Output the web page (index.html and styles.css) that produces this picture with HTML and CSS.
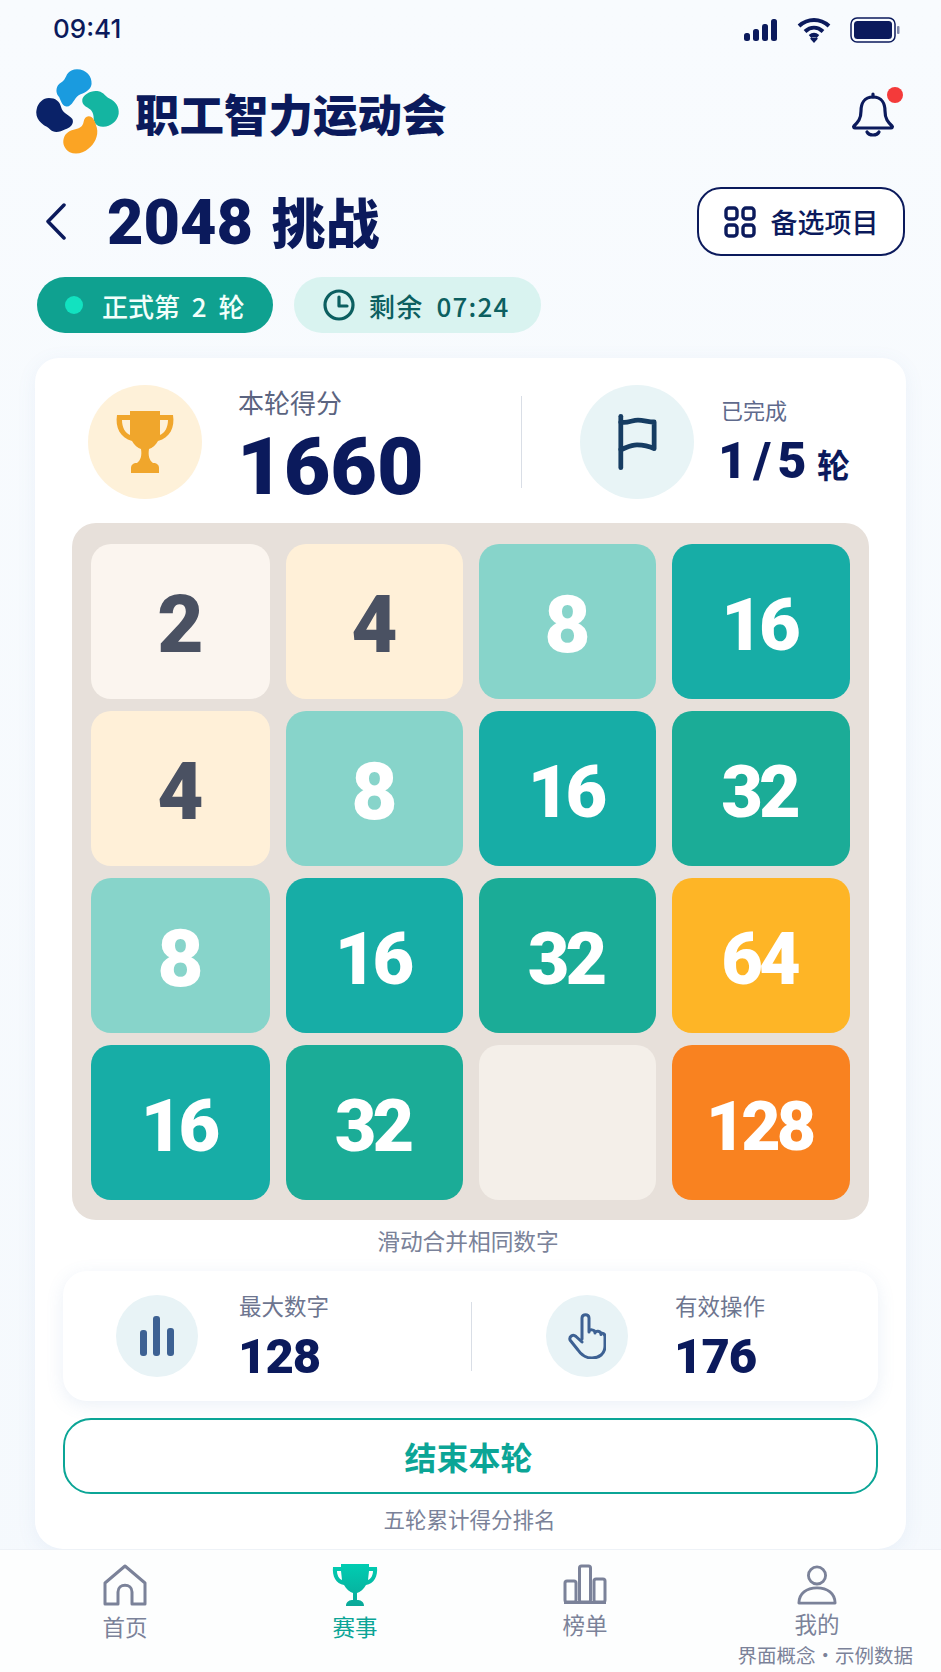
FILE: index.html
```html
<!DOCTYPE html>
<html lang="zh-CN">
<head>
  <meta charset="UTF-8">
  <title>2048 挑战</title>
  <meta name="viewport" content="width=device-width, initial-scale=1.0">
  <link rel="stylesheet" href="styles.css">
</head>
<body>
<div class="page">
  <div class="status">
    <span class="time">09:41</span>
    <div class="status-icons">
      <svg width="36" height="24" viewBox="0 0 36 24"><rect x="0" y="15" width="6" height="8" rx="2.5"/><rect x="9" y="11" width="6" height="12" rx="2.5"/><rect x="18" y="6" width="6" height="17" rx="2.5"/><rect x="27" y="1" width="6" height="22" rx="2.5"/></svg>
      <svg width="34" height="26" viewBox="0 0 34 26" class="wifi"><path d="M2 9C11 1 23 1 32 9"/><path d="M8 14.500C13.500 9.500 20.500 9.500 26 14.500"/><path d="M13 19.500C15.500 17.500 18.500 17.500 21 19.500"/><path class="wifi-dot" d="M17 26l-4-4.500c2.500-1.500 5.500-1.500 8 0z"/></svg>
      <svg class="battery" width="50" height="26" viewBox="0 0 50 26"><rect x="1" y="1" width="44" height="24" rx="6" fill="none" stroke="#0b1a5c" stroke-width="1.500"/><rect x="4" y="4" width="38" height="18" rx="3.500"/><rect x="47" y="9" width="2.500" height="8" rx="1" fill="#7d86a8"/></svg>
    </div>
  </div>

  <div class="brand">
    <div class="brand-left">
      <svg class="logo" width="84" height="87" viewBox="46 61 254 260">
        <path fill="#1a9bdf" d="M170 63C198 63 216 85 214 108C212 128 190 135 175 142C162 150 155 178 138 176C122 174 122 155 114 145C104 132 106 112 122 103C132 97 134 90 140 78C147 68 158 63 170 63Z"/>
        <path fill="#14b5a1" d="M186 155C188 140 215 125 235 130C252 134 256 146 268 152C288 162 298 178 296 198C292 222 270 238 248 237C228 236 220 225 220 205C218 185 205 182 195 175C188 170 185 163 186 155Z"/>
        <path fill="#0a2268" d="M85 150C105 150 118 160 122 178C126 196 146 200 156 214C162 228 150 240 135 245C118 254 100 258 88 245C80 236 72 236 62 226C50 215 44 200 48 184C52 164 68 150 85 150Z"/>
        <path fill="#fba424" d="M205 205C220 205 226 225 230 240C236 265 222 290 205 303C188 318 165 322 148 314C132 305 125 288 130 272C135 255 150 248 165 245C180 241 188 235 190 222C192 212 197 205 205 205Z"/>
      </svg>
      <h1 class="brand-name">职工智力运动会</h1>
    </div>
    <div class="bell">
      <svg width="44" height="46" viewBox="0 0 44 46" fill="none" stroke="#0b1a5c" stroke-width="3.200" stroke-linecap="round" stroke-linejoin="round"><path d="M22 3v3"/><path d="M22 6C13 6 10 13 10 20C10 28 7 31 3 35C2 36 3 37 4 37H40C41 37 42 36 41 35C37 31 34 28 34 20C34 13 31 6 22 6Z"/><path d="M16 41C18 45 26 45 28 41"/></svg>
      <span class="bell-dot"></span>
    </div>
  </div>

  <div class="titlebar">
    <div class="title-left">
      <svg class="back" width="22" height="37" viewBox="0 0 22 37" fill="none" stroke="#0b1a5c" stroke-width="3.500" stroke-linecap="round" stroke-linejoin="round"><path d="M19 2L3 18.500L19 35"/></svg>
      <h2 class="title"><span class="title-num">2048</span> 挑战</h2>
    </div>
    <div class="alt-btn">
      <svg width="32" height="32" viewBox="0 0 32 32" fill="none" stroke="#0b1a5c" stroke-width="3.400"><rect x="2" y="2" width="11" height="11" rx="3"/><rect x="19" y="2" width="11" height="11" rx="3"/><rect x="2" y="19" width="11" height="11" rx="3"/><rect x="19" y="19" width="11" height="11" rx="3"/></svg>
      <span>备选项目</span>
    </div>
  </div>

  <div class="pills">
    <div class="pill pill-round"><span class="pill-dot"></span><span>正式第 2 轮</span></div>
    <div class="pill pill-time">
      <svg width="32" height="32" viewBox="0 0 32 32" fill="none" stroke="#0c5f60" stroke-width="3.200" stroke-linecap="round" stroke-linejoin="round"><circle cx="16" cy="16" r="14"/><path d="M16 8v9h8"/></svg>
      <span>剩余 07:24</span>
    </div>
  </div>

  <div class="card">
    <div class="score-row">
      <div class="score-main">
        <div class="circle circle-gold">
          <svg width="60" height="62" viewBox="0 0 60 62"><path fill="#f0a62c" d="M15 0H45V4H58C60 16 55 27 43 30C41 34 37 37 34 38C33 44 34 49 38 52C42 52 44 54 44 57V62H16V57C16 54 18 52 22 52C26 49 27 44 26 38C23 37 19 34 17 30C5 27 0 16 2 4H15ZM7 9C7 16 10 22 15 24V9ZM53 9H45V24C50 22 53 16 53 9Z"/></svg>
        </div>
        <div class="score-text">
          <div class="score-label">本轮得分</div>
          <div class="score-value">1660</div>
        </div>
      </div>
      <div class="vline vline-tall"></div>
      <div class="score-side">
        <div class="circle circle-pale">
          <svg width="40" height="58" viewBox="0 0 42 58" fill="none" stroke="#163c62" stroke-width="5" stroke-linecap="round" stroke-linejoin="round"><path d="M4 2V56"/><path d="M4 8C10 10 16 6 22 6C28 6 33 8 39 8V36C33 33 27 32 21 32C14 32 10 35 4 37"/></svg>
        </div>
        <div class="side-text">
          <div class="side-label">已完成</div>
          <div class="side-value">1 / 5 <span class="side-unit">轮</span></div>
        </div>
      </div>
    </div>

    <div class="board">
      <div class="tile t2">2</div>
      <div class="tile t4">4</div>
      <div class="tile t8">8</div>
      <div class="tile t16">16</div>
      <div class="tile t4">4</div>
      <div class="tile t8">8</div>
      <div class="tile t16">16</div>
      <div class="tile t32">32</div>
      <div class="tile t8">8</div>
      <div class="tile t16">16</div>
      <div class="tile t32">32</div>
      <div class="tile t64">64</div>
      <div class="tile t16">16</div>
      <div class="tile t32">32</div>
      <div class="tile empty"></div>
      <div class="tile t128">128</div>
    </div>
    <p class="hint">滑动合并相同数字</p>

    <div class="stats">
      <div class="stat stat-max">
        <div class="circle-sm">
          <svg width="34" height="40" viewBox="0 0 34 40" fill="#3d6193"><rect x="0" y="14" width="7" height="26" rx="3"/><rect x="13" y="0" width="7" height="40" rx="3"/><rect x="27" y="12" width="7" height="28" rx="3"/></svg>
        </div>
        <div>
          <div class="stat-label">最大数字</div>
          <div class="stat-value">128</div>
        </div>
      </div>
      <div class="vline vline-short"></div>
      <div class="stat stat-ops">
        <div class="circle-sm">
          <svg width="38" height="46" viewBox="0 0 38 46" fill="none" stroke="#3d6193" stroke-width="3" stroke-linecap="round" stroke-linejoin="round"><path d="M14 26V5C14 0.500 21 0.500 21 5V19C21 16 27 16 27 20C27 17.500 33 17.500 33 21.500C33 19.500 37 20 37 23.500V33C37 41 31 45 24 45C18 45 14 43 10 37L2 27C1 23 5 21 8 23.500L14 29"/></svg>
        </div>
        <div>
          <div class="stat-label">有效操作</div>
          <div class="stat-value">176</div>
        </div>
      </div>
    </div>

    <div class="end-btn">结束本轮</div>
    <p class="foot">五轮累计得分排名</p>
  </div>

  <div class="nav">
    <div class="nav-item">
      <svg width="44" height="42" viewBox="0 0 44 42" fill="none" stroke="#7b8299" stroke-width="3" stroke-linejoin="round"><path d="M22 2L42 19V40H29V28C29 19 15 19 15 28V40H2V19Z"/></svg>
      <span>首页</span>
    </div>
    <div class="nav-item active">
      <svg width="46" height="42" viewBox="0 0 46 42"><defs><linearGradient id="cup" x1="0" y1="0" x2="0" y2="1"><stop offset="0" stop-color="#00cdb2"/><stop offset="1" stop-color="#0aa898"/></linearGradient></defs><path fill="url(#cup)" d="M9 0H37V3H45C46 12 42 20 34 21C32 25 28 28 25 29V36C28 36 32 37 32 42H14C14 37 18 36 21 36V29C18 28 14 25 12 21C4 20 0 12 1 3H9ZM5 7C5 11 7 15 10 16L9 7ZM41 7H37L36 16C39 15 41 11 41 7Z"/></svg>
      <span>赛事</span>
    </div>
    <div class="nav-item">
      <svg width="44" height="40" viewBox="0 0 44 40" fill="none" stroke="#7b8299" stroke-width="3" stroke-linejoin="round"><rect x="2" y="17" width="11" height="21" rx="2"/><rect x="16.500" y="2" width="11" height="36" rx="2"/><rect x="31" y="15" width="11" height="23" rx="2"/><path d="M1 38.500H43"/></svg>
      <span>榜单</span>
    </div>
    <div class="nav-item nav-me">
      <svg width="40" height="42" viewBox="0 0 42 42" fill="none" stroke="#7b8299" stroke-width="3" stroke-linejoin="round"><circle cx="21" cy="11" r="9"/><path d="M2 40C2 30 10 24 21 24C32 24 40 30 40 40Z"/></svg>
      <span>我的</span>
    </div>
    <div class="note">界面概念・示例数据</div>
  </div>
</div>
</body>
</html>
```

FILE: styles.css
```css
* {
  box-sizing: border-box;
}
body {
  margin: 0;
  font-family: "Noto Sans CJK SC", "Noto Sans", sans-serif;
  color: #0b1a5c;
}
h1, h2, p {
  margin: 0;
}
.page {
  width: 941px;
  height: 1672px;
  display: flex;
  flex-direction: column;
  overflow: hidden;
  background: linear-gradient(#f8fbfe, #f5f9fd);
}

.status {
  height: 56px;
  padding: 0 41px 0 53px;
  display: flex;
  justify-content: space-between;
  align-items: center;
}
.time {
  font-family: Inter, sans-serif;
  font-size: 26px;
  font-weight: 500;
}
.status-icons {
  margin-top: 4px;
  display: flex;
  align-items: center;
}
.status-icons svg {
  fill: #0b1a5c;
}
.status-icons .wifi {
  margin-left: 17px;
}
.status-icons .battery {
  margin-left: 19px;
}
.wifi path {
  fill: none;
  stroke: #0b1a5c;
  stroke-width: 4px;
}
.wifi .wifi-dot {
  fill: #0b1a5c;
  stroke: none;
}

.brand {
  height: 110px;
  padding: 0 46px 0 36px;
  display: flex;
  justify-content: space-between;
  align-items: center;
}
.brand-left {
  display: flex;
  align-items: center;
  gap: 15px;
}
.brand-name {
  font-size: 44.500px;
  font-weight: 900;
  line-height: 1.2;
  margin-top: 4px;
}
.bell {
  position: relative;
  display: flex;
  margin-top: 6px;
}
.bell-dot {
  position: absolute;
  top: -4px;
  right: -8px;
  width: 16px;
  height: 16px;
  border-radius: 50%;
  background: #f43a3a;
}

.titlebar {
  margin-top: 21px;
  height: 69px;
  padding: 0 36px 0 45px;
  display: flex;
  justify-content: space-between;
  align-items: center;
}
.title-left {
  display: flex;
  align-items: center;
  gap: 40px;
}
.title {
  font-size: 54px;
  font-weight: 900;
  line-height: 69px;
  word-spacing: 6px;
}
.title-num {
  font-family: Roboto, sans-serif;
  font-size: 63px;
  font-weight: 900;
}
.alt-btn {
  width: 208px;
  height: 69px;
  border: 2px solid #0b1a5c;
  border-radius: 24px;
  background: #fff;
  display: flex;
  align-items: center;
  justify-content: center;
  gap: 15px;
  font-size: 27px;
  font-weight: 500;
}

.pills {
  margin-top: 21px;
  padding-left: 37px;
  display: flex;
  gap: 21px;
}
.pill {
  height: 56px;
  border-radius: 28px;
  display: flex;
  align-items: center;
  font-size: 26px;
  font-weight: 500;
  word-spacing: 6px;
}
.pill-round {
  width: 236px;
  padding-left: 28px;
  gap: 19px;
  background: #0fa190;
  color: #f2fffb;
}
.pill-dot {
  width: 18px;
  height: 18px;
  border-radius: 50%;
  background: #12e2c0;
}
.pill-time {
  width: 247px;
  padding-left: 29px;
  gap: 14px;
  letter-spacing: 1.200px;
  background: #d9f3f0;
  color: #0c5f60;
}

.card {
  flex: 1;
  margin: 25px 35px 0;
  padding: 27px 28px 0;
  border-radius: 24px 24px 28px 28px;
  background: #fff;
  box-shadow: 0 4px 20px rgba(90, 130, 190, 0.08);
}

.score-row {
  height: 114px;
  padding-left: 25px;
  display: flex;
  align-items: center;
}
.score-main {
  width: 433px;
  display: flex;
  align-items: center;
  gap: 36px;
}
.circle {
  width: 114px;
  height: 114px;
  flex: none;
  border-radius: 50%;
  display: flex;
  align-items: center;
  justify-content: center;
}
.circle-gold {
  background: #fef1d9;
}
.circle-pale {
  background: #e8f4f6;
}
.score-text {
  padding-top: 5px;
}
.score-label {
  font-size: 26px;
  line-height: 36px;
  color: #5b6480;
}
.score-value {
  font-family: Roboto, sans-serif;
  font-size: 80.500px;
  font-weight: 900;
  line-height: 76px;
  margin-top: 9px;
  margin-left: -1px;
}
.vline {
  width: 1px;
  flex: none;
  background: #d9dee6;
}
.vline-tall {
  height: 92px;
}
.vline-short {
  height: 69px;
}
.score-side {
  margin-left: 58px;
  display: flex;
  align-items: center;
  gap: 27px;
}
.side-label {
  font-size: 22px;
  line-height: 30px;
  color: #5f6a8c;
}
.side-value {
  font-family: Roboto, sans-serif;
  font-size: 50px;
  font-weight: 900;
  line-height: 54px;
  margin-top: 10px;
  margin-left: -3px;
  white-space: nowrap;
  word-spacing: -6px;
}
.side-unit {
  margin-left: 4px;
  font-family: "Noto Sans CJK SC", sans-serif;
  font-size: 33px;
  font-weight: 700;
}

.board {
  margin: 24px 9px 0;
  padding: 21px 20px 20.500px 19px;
  border-radius: 24px;
  background: #e7e0da;
  display: grid;
  grid-template-columns: 179px 177px 177px 178px;
  grid-auto-rows: 154.500px;
  column-gap: 16px;
  row-gap: 12.500px;
}
.tile {
  padding: 9px 4px 0 0;
  border-radius: 20px;
  display: flex;
  align-items: center;
  justify-content: center;
  font-family: Roboto, sans-serif;
  font-weight: 900;
  font-size: 72px;
  letter-spacing: -4px;
  color: #fff;
}
.t2, .t4, .t8 {
  padding: 7px 0 0;
  font-size: 80px;
  letter-spacing: 0;
}
.t2 {
  background: #fbf5ef;
  color: #4a5162;
}
.t4 {
  background: #fff0d8;
  color: #4a5162;
}
.t8 {
  background: #87d4ca;
}
.t16 {
  background: #17ada6;
}
.t32 {
  background: #1bac97;
}
.t64 {
  background: #feb526;
}
.t128 {
  background: #f98220;
  font-size: 68px;
}
.empty {
  background: #f4efe9;
}

.hint {
  margin-top: 5px;
  padding-right: 5px;
  text-align: center;
  font-size: 22.700px;
  line-height: 32px;
  color: #7a8299;
}

.stats {
  margin-top: 14px;
  height: 130px;
  padding-left: 53px;
  border-radius: 24px;
  background: #fff;
  box-shadow: 0 4px 18px rgba(90, 130, 190, 0.12);
  display: flex;
  align-items: center;
}
.stat {
  display: flex;
  align-items: center;
}
.stat-max {
  width: 355px;
  gap: 41px;
}
.stat-ops {
  margin-left: 74px;
  gap: 47px;
}
.circle-sm {
  width: 82px;
  height: 82px;
  flex: none;
  border-radius: 50%;
  background: #e8f3f6;
  display: flex;
  align-items: center;
  justify-content: center;
}
.stat-label {
  font-size: 22.500px;
  line-height: 30px;
  color: #6d758f;
}
.stat-value {
  font-family: Roboto, sans-serif;
  font-size: 49px;
  font-weight: 900;
  line-height: 50px;
  margin-top: 12px;
  margin-left: -1px;
  letter-spacing: -1px;
}

.end-btn {
  margin-top: 17px;
  height: 76px;
  padding-right: 4px;
  border: 2px solid #0ba596;
  border-radius: 28px;
  display: flex;
  align-items: center;
  justify-content: center;
  font-size: 32px;
  font-weight: 700;
  color: #0ba596;
}
.foot {
  margin-top: 9px;
  padding-right: 2px;
  text-align: center;
  font-size: 21.500px;
  line-height: 32px;
  color: #7a8299;
}

.nav {
  position: relative;
  height: 123px;
  padding: 14px 10px 0;
  display: grid;
  grid-template-columns: repeat(4, 230px);
  background: #fdfefe;
  border-top: 1px solid #eef2f7;
}
.nav-item {
  display: flex;
  flex-direction: column;
  align-items: center;
  gap: 7px;
  font-size: 22.500px;
  line-height: 26px;
  color: #7b8299;
}
.nav-item.active {
  color: #0ba596;
}
.nav-me {
  gap: 4px;
  margin-left: 4px;
}
.note {
  position: absolute;
  right: 28px;
  bottom: 5px;
  font-size: 19.500px;
  line-height: 24px;
  color: #7b8299;
  white-space: nowrap;
}
```
